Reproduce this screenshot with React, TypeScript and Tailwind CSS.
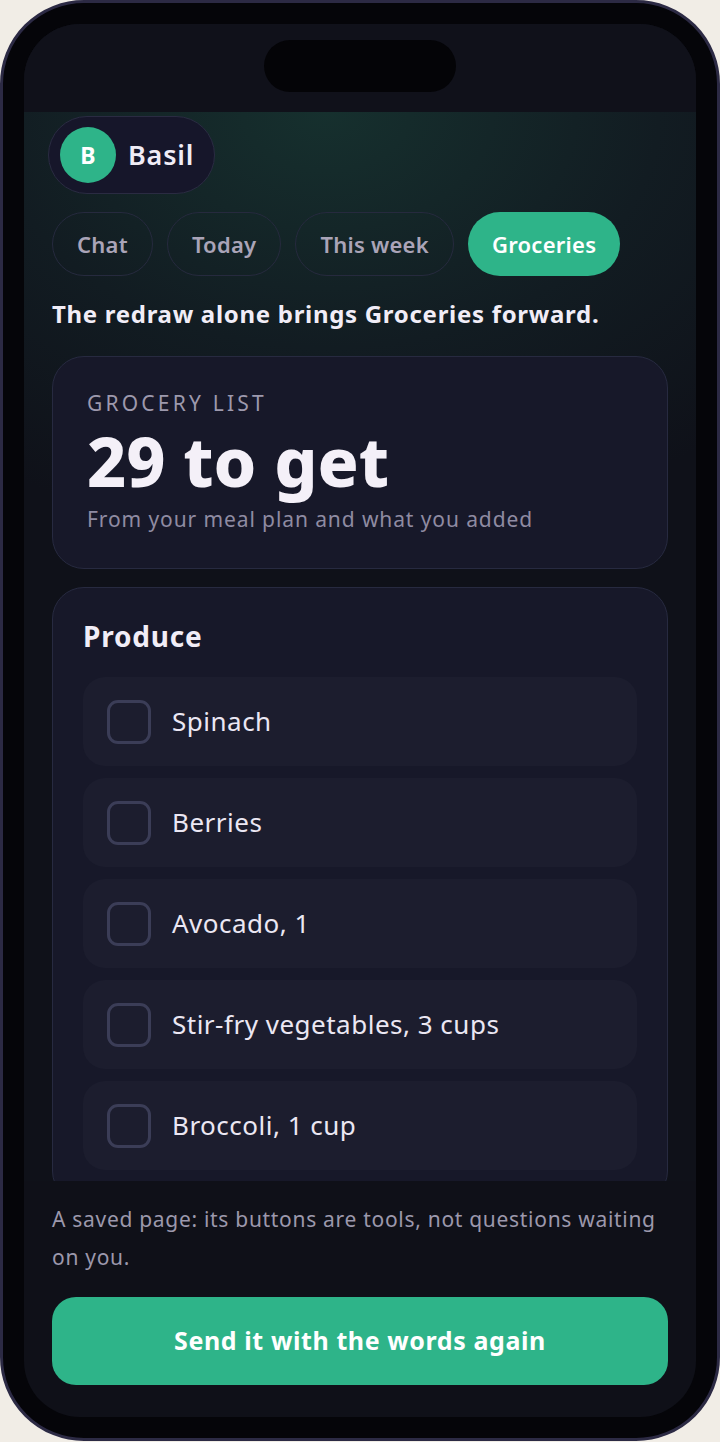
import React from "react";

const items = [
  "Spinach",
  "Berries",
  "Avocado, 1",
  "Stir-fry vegetables, 3 cups",
  "Broccoli, 1 cup",
];

const tabs = ["Chat", "Today", "This week", "Groceries"];

export default function App() {
  return (
    <div
      className="min-h-screen w-[720px] bg-[#f1ede6]"
      style={{ fontFamily: "'Noto Sans', 'Open Sans', sans-serif" }}
    >
      <div className="h-[1441px] w-[720px] rounded-[84px] border-[3px] border-[#2c2a44] bg-[#050509] p-[21px]">
        <div className="flex h-full flex-col overflow-hidden rounded-[56px] bg-[#0f1018]">
          {/* status bar */}
          <div className="flex h-[88px] shrink-0 justify-center bg-[#10111a] pt-4">
            <div className="h-[52px] w-[192px] rounded-full bg-[#040407]" />
          </div>

          {/* scroll area */}
          <div className="min-h-0 flex-1 overflow-hidden bg-[radial-gradient(ellipse_90%_40%_at_45%_0%,#16302e_0%,#121c22_55%,#0f1119_100%)] px-7 pt-1">
            <div className="-ml-1 inline-flex items-center gap-3 rounded-full border border-[#2a2b42] bg-[#16162a] py-[10px] pl-[11px] pr-5">
              <div className="flex h-14 w-14 items-center justify-center rounded-full bg-[#2eb489] text-[23px] font-bold text-white">
                B
              </div>
              <span className="text-[27px] font-semibold tracking-[0.8px] text-[#f0ecf6]">
                Basil
              </span>
            </div>

            <div className="mt-[18px] flex gap-[14px]">
              {tabs.map((t) => (
                <div
                  key={t}
                  className={
                    t === "Groceries"
                      ? "flex h-16 items-center rounded-full bg-[#2eb489] px-6 text-[22px] font-semibold tracking-[0.25px] text-white"
                      : "flex h-16 items-center rounded-full border border-[#262a3e] px-6 text-[22px] font-semibold tracking-[0.25px] text-[#aaa4b8]"
                  }
                >
                  {t}
                </div>
              ))}
            </div>

            <p className="mt-[22px] text-[24px] font-bold leading-8 tracking-[0.7px] text-[#f1edf7]">
              The redraw alone brings Groceries forward.
            </p>

            <div className="mt-[26px] rounded-[32px] border border-[#272a40] bg-[#171829] px-[34px] pb-[35px] pt-[34px]">
              <div className="text-[21px] uppercase leading-6 tracking-[3.2px] text-[#9d99ad]">
                Grocery list
              </div>
              <div className="mt-[8px] text-[68px] font-extrabold leading-[76px] text-[#f4f0f8]">
                29 to get
              </div>
              <div className="mt-[6px] text-[21px] leading-7 tracking-[0.9px] text-[#8f8ba2]">
                From your meal plan and what you added
              </div>
            </div>

            <div className="mt-[18px] rounded-[32px] border border-[#272a40] bg-[#171829] px-[30px] pt-[30px] pb-8">
              <div className="text-[28px] font-bold leading-9 tracking-[0.8px] text-[#f1edf7]">
                Produce
              </div>
              <div className="mt-[23px] flex flex-col gap-3">
                {items.map((it) => (
                  <div
                    key={it}
                    className="flex h-[89px] items-center gap-[21px] rounded-[22px] bg-[#1c1d2e] px-6"
                  >
                    <div className="h-11 w-11 shrink-0 rounded-[11px] border-[3px] border-[#3b3d57]" />
                    <span className="text-[26px] tracking-[0.5px] text-[#ebe7f3]">{it}</span>
                  </div>
                ))}
              </div>
            </div>
          </div>

          {/* footer */}
          <div className="shrink-0 px-7 pt-[19px] pb-8">
            <p className="text-[21px] leading-[38px] tracking-[0.7px] text-[#9c98ac]">
              A saved page: its buttons are tools, not questions waiting on you.
            </p>
            <button className="mt-[21px] flex h-[88px] w-full items-center justify-center rounded-[24px] bg-[#2eb489] text-[25px] font-bold tracking-[0.6px] text-white">
              Send it with the words again
            </button>
          </div>
        </div>
      </div>
    </div>
  );
}
